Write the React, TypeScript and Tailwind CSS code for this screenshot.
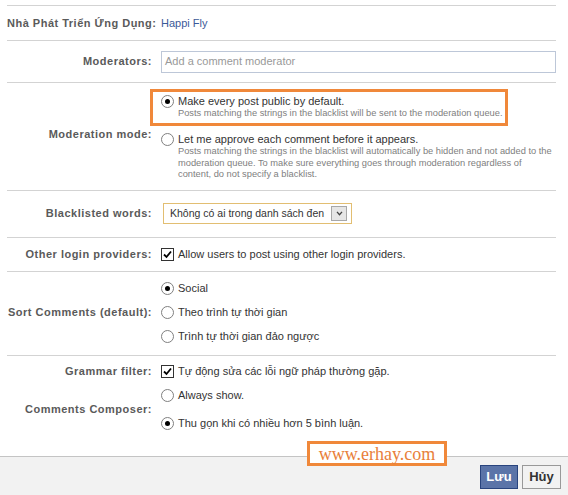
import type { ReactNode } from "react";

function Radio({ checked = false }: { checked?: boolean }) {
  return (
    <span className="flex h-[13px] w-[13px] shrink-0 items-center justify-center rounded-full border border-[#7f7f7f] bg-white">
      {checked && <span className="h-[5px] w-[5px] rounded-full bg-black" />}
    </span>
  );
}

function Checkbox() {
  return (
    <span className="flex h-[13px] w-[13px] shrink-0 items-center justify-center border border-[#333] bg-white">
      <svg viewBox="0 0 11 11" className="h-[11px] w-[11px]">
        <path d="M2 5.5 L4.5 8 L9 2.5" fill="none" stroke="#000" strokeWidth="1.8" />
      </svg>
    </span>
  );
}

function Row({ label, children, className = "" }: { label: string; children: ReactNode; className?: string }) {
  return (
    <div className={`grid grid-cols-[145px_1fr] items-center gap-x-[9px] border-b border-[#d3d3d3] ${className}`}>
      <div className="whitespace-nowrap text-right font-bold tracking-[0.5px] text-[#5a5a5a]">{label}</div>
      <div>{children}</div>
    </div>
  );
}

function Option({ checked, children }: { checked?: boolean; children: ReactNode }) {
  return (
    <div className="flex h-[24px] items-center gap-[4px]">
      <Radio checked={checked} />
      <span>{children}</span>
    </div>
  );
}

export default function App() {
  return (
    <div className="relative min-h-[495px] bg-white pt-[5px] font-['Liberation_Sans',Arial,sans-serif] text-[11px] leading-[13px] text-[#333]">
      <div className="ml-[7px] w-[549px] border-t border-[#d3d3d3]">
        <Row label="Nhà Phát Triển Ứng Dụng:" className="h-[35px]">
          <span className="text-[#3b5998]">Happi Fly</span>
        </Row>

        <Row label="Moderators:" className="h-[42px]">
          <div className="flex h-[22px] items-center border border-[#bdc7d8] px-[3px] text-[#999]">
            Add a comment moderator
          </div>
        </Row>

        <Row label="Moderation mode:" className="pt-[6px] pb-[9px]">
          <div className="flex flex-col">
            <div className="-ml-[11px] w-[358px] border-[3px] border-[#f0883a] pt-[3px] pb-[4px] pl-[8px]">
              <div className="flex items-center gap-[4px]">
                <Radio checked />
                <span>Make every post public by default.</span>
              </div>
              <div className="whitespace-nowrap pl-[17px] text-[9.3px] leading-[11px] text-[#808080]">
                Posts matching the strings in the blacklist will be sent to the moderation queue.
              </div>
            </div>
            <div className="mt-[7px] flex items-center gap-[4px]">
              <Radio />
              <span>Let me approve each comment before it appears.</span>
            </div>
            <div className="whitespace-nowrap pl-[17px] text-[9.3px] leading-[11.5px] text-[#808080]">
              Posts matching the strings in the blacklist will automatically be hidden and not added to the
              <br />
              moderation queue. To make sure everything goes through moderation regardless of
              <br />
              content, do not specify a blacklist.
            </div>
          </div>
        </Row>

        <Row label="Blacklisted words:" className="h-[47px]">
          <div className="ml-[2px] flex h-[21px] w-[189px] items-center justify-between border border-[#e2be72] bg-white pl-[6px] pr-[4px]">
            <span className="whitespace-nowrap text-[10.5px]">Không có ai trong danh sách đen</span>
            <span className="flex h-[15px] w-[16px] shrink-0 items-center justify-center border border-[#a8a8a8] bg-[#e6e6e6]">
              <svg viewBox="0 0 8 6" className="h-[5px] w-[7px]">
                <path d="M1 1 L4 4.5 L7 1" fill="none" stroke="#444" strokeWidth="1.6" />
              </svg>
            </span>
          </div>
        </Row>

        <Row label="Other login providers:" className="h-[34px]">
          <div className="flex items-center gap-[4px]">
            <Checkbox />
            <span>Allow users to post using other login providers.</span>
          </div>
        </Row>

        <Row label="Sort Comments (default):" className="pt-[5px] pb-[6px]">
          <div className="flex flex-col">
            <Option checked>Social</Option>
            <Option>Theo trình tự thời gian</Option>
            <Option>Trình tự thời gian đảo ngược</Option>
          </div>
        </Row>

        <div className="flex h-[100px] flex-col pt-[4px]">
          <div className="grid h-[24px] grid-cols-[145px_1fr] items-center gap-x-[9px]">
            <div className="whitespace-nowrap text-right font-bold tracking-[0.5px] text-[#5a5a5a]">Grammar filter:</div>
            <div className="flex items-center gap-[4px]">
              <Checkbox />
              <span>Tự động sửa các lỗi ngữ pháp thường gặp.</span>
            </div>
          </div>
          <div className="grid grid-cols-[145px_1fr] items-center gap-x-[9px]">
            <div className="whitespace-nowrap text-right font-bold tracking-[0.5px] text-[#5a5a5a]">Comments Composer:</div>
            <div className="flex flex-col gap-[4px]">
              <Option>Always show.</Option>
              <Option checked>Thu gọn khi có nhiều hơn 5 bình luận.</Option>
            </div>
          </div>
        </div>
      </div>

      <div className="flex h-[39px] items-start justify-end gap-[4px] border-t border-[#c4c4c4] bg-[#f2f2f2] pt-[8px] pr-[7px]">
        <button className="h-[24px] w-[38px] border border-[#29447e] bg-[#5b74a8] text-[13px] font-bold text-white">
          Lưu
        </button>
        <button className="h-[24px] w-[39px] border border-[#999] bg-[#f2f2f2] text-[13px] font-bold text-[#333]">
          Hủy
        </button>
      </div>

      <div className="absolute left-[307px] top-[441px] flex h-[25px] w-[140px] items-center justify-center border-[3px] border-[#f0883a] bg-white font-['Liberation_Serif',serif] text-[18px] leading-none text-[#e8803a]">
        www.erhay.com
      </div>
    </div>
  );
}
